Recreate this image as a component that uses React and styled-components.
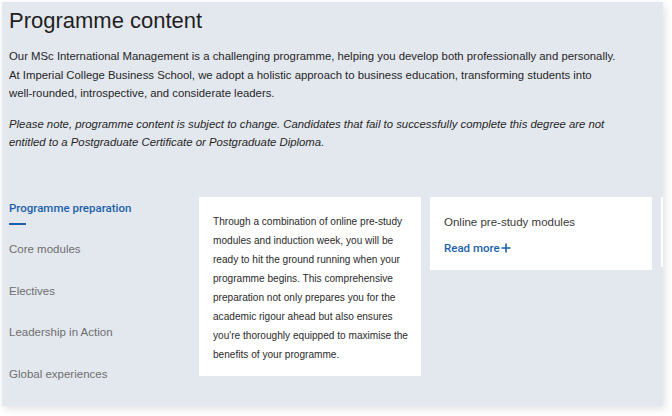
import styled, { createGlobalStyle } from "styled-components";

const Global = createGlobalStyle`
  html, body { margin: 0; padding: 0; background: #ffffff; }
  body { font-family: "Liberation Sans", Arial, sans-serif; }
  * { box-sizing: border-box; }
`

const Page = styled.div`
  width: 672px;
  height: 416px;
  padding: 2px 0 0 2px;
  overflow: hidden;
`

const Panel = styled.section`
  width: 661px;
  height: 404px;
  background: #e3e8ef;
  box-shadow: 2px 3px 8px rgba(0, 0, 0, 0.12);
  padding: 5px 0 0 7px;
  overflow: hidden;
  color: #262626;
`

const Title = styled.h2`
  margin: 0;
  font-size: 22px;
  line-height: 28px;
  font-weight: 400;
  color: #1f1f1f;
`

const Intro = styled.p`
  margin: ${(p) => p.$top || 0}px 0 0;
  font-size: 11.35px;
  line-height: 18.5px;
  font-style: ${(p) => (p.$italic ? "italic" : "normal")};
  color: #262626;
  width: 612px;
`

const NoWrap = styled.span`
  white-space: nowrap;
`

const Body = styled.div`
  display: grid;
  grid-template-columns: 190px 1fr;
  margin-top: 45px;
`

const Nav = styled.ul`
  list-style: none;
  margin: 0;
  padding: 4px 0 0;
`

const NavItem = styled.li`
  height: 41.5px;
  font-family: ${(p) => (p.$active ? "Roboto, sans-serif" : "inherit")};
  font-size: 11.5px;
  line-height: 14px;
  font-weight: ${(p) => (p.$active ? 500 : 400)};
  color: ${(p) => (p.$active ? "#1b5fa9" : "#6e6e6e")};

  &::after {
    content: "";
    display: ${(p) => (p.$active ? "block" : "none")};
    width: 17px;
    height: 2.5px;
    margin-top: 8px;
    background: #1b5fa9;
  }
`

const Cards = styled.div`
  display: flex;
  gap: 9px;
  align-items: flex-start;
  overflow: hidden;
`

const Card = styled.div`
  flex: 0 0 222px;
  background: #ffffff;
  padding: ${(p) => p.$pad || "15px 10px 12px 14px"};
  min-height: ${(p) => p.$min || 0}px;
`

const CardText = styled.p`
  margin: 0;
  font-size: 10.1px;
  line-height: 19px;
  color: #2a2a2a;
`

const CardTitle = styled.p`
  margin: 0;
  font-size: 11.5px;
  line-height: 14px;
  color: #3a3a3a;
`

const ReadMore = styled.a`
  display: inline-flex;
  align-items: center;
  margin-top: 12px;
  font-family: Roboto, sans-serif;
  font-size: 11.5px;
  line-height: 14px;
  font-weight: 500;
  color: #1b5fa9;
  text-decoration: none;
`

const Plus = () => (
  <svg width="10" height="10" viewBox="0 0 10 10" style={{ marginLeft: 1 }}>
    <path d="M5 0.5v9M0.5 5h9" stroke="#1b5fa9" strokeWidth="1.6" />
  </svg>
)

const navItems = [
  "Programme preparation",
  "Core modules",
  "Electives",
  "Leadership in Action",
  "Global experiences",
]

export default function App() {
  return (
    <>
      <Global />
      <Page>
        <Panel>
          <Title>Programme content</Title>
          <Intro $top={12}>
            Our MSc International Management is a challenging programme, helping you develop both professionally and personally.
            At Imperial College Business School, we adopt a holistic approach to business education, transforming students into{" "}
            <NoWrap>well-rounded,</NoWrap> introspective, and considerate leaders.
          </Intro>
          <Intro $top={12} $italic>
            Please note, programme content is subject to change. Candidates that fail to successfully complete this degree are not
            entitled to a Postgraduate Certificate or Postgraduate Diploma.
          </Intro>
          <Body>
            <Nav>
              {navItems.map((item, i) => (
                <NavItem key={item} $active={i === 0}>{item}</NavItem>
              ))}
            </Nav>
            <Cards>
              <Card>
                <CardText>
                  Through a combination of online pre-study modules and induction week, you will be ready to hit the ground running when your programme begins. This comprehensive preparation not only prepares you for the academic rigour ahead but also ensures you're thoroughly equipped to maximise the benefits of your programme.
                </CardText>
              </Card>
              <Card $pad="18px 14px 14px">
                <CardTitle>Online pre-study modules</CardTitle>
                <ReadMore href="#">Read more<Plus /></ReadMore>
              </Card>
              <Card $min={70} />
            </Cards>
          </Body>
        </Panel>
      </Page>
    </>
  )
}
